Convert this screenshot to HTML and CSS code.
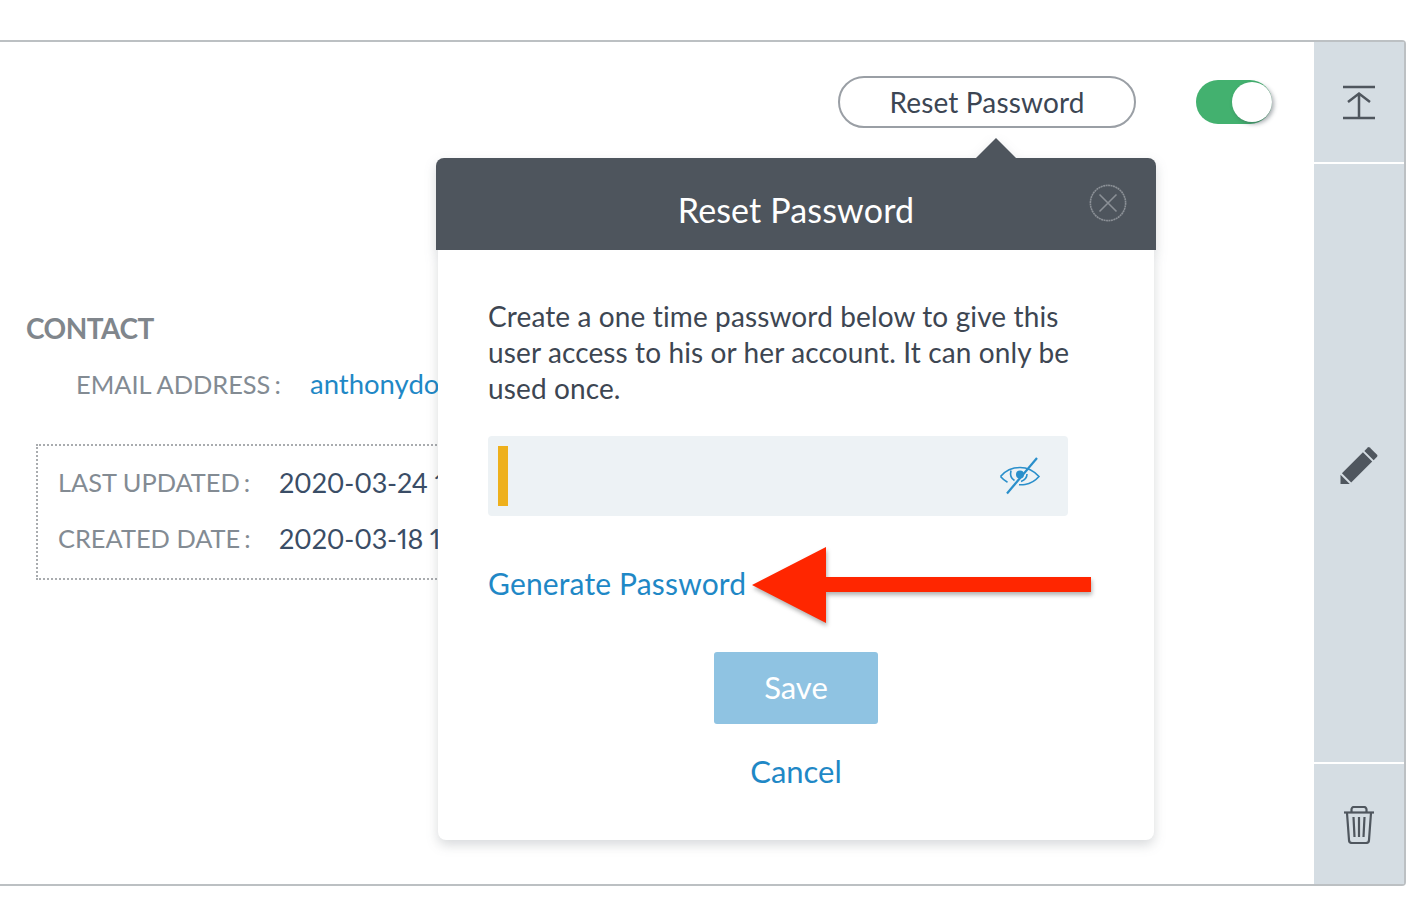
FILE: index.html
```html
<!DOCTYPE html>
<html lang="en">
<head>
<meta charset="utf-8">
<title>Reset Password</title>
<link rel="stylesheet" href="styles.css">
</head>
<body>
<div class="card">
  <main class="main">
    <div class="toolbar">
      <button class="pill">Reset Password</button>
      <div class="toggle"><span class="knob"></span></div>
    </div>
    <section class="contact">
      <h2 class="contact-title">CONTACT</h2>
      <div class="email-row"><span class="label">EMAIL ADDRESS<span class="colon">:</span></span><a class="email-link">anthonydo</a></div>
      <div class="meta">
        <div class="meta-row"><span class="label meta-label">LAST UPDATED<span class="colon">:</span></span><span class="meta-value">2020-03-24 1</span></div>
        <div class="meta-row"><span class="label meta-label">CREATED DATE<span class="colon">:</span></span><span class="meta-value">2020-03-18 1</span></div>
      </div>
    </section>

    <div class="popover">
      <span class="caret"></span>
      <header class="pop-head">
        <h1 class="pop-title">Reset Password</h1>
        <svg class="pop-close" viewBox="0 0 38 38" width="38" height="38" fill="none" stroke="#8b9096" stroke-width="1.6"><circle cx="19" cy="19" r="17.6" stroke-dasharray="2 .5"/><path d="M10.5 10.5l17 17M27.5 10.5l-17 17"/></svg>
      </header>
      <div class="pop-body">
        <p class="pop-text">Create a one time password below to give this user access to his or her account. It can only be used once.</p>
        <div class="pw-field">
          <span class="pw-cursor"></span>
          <svg class="pw-eye" viewBox="0 0 42 40" width="42" height="40" fill="none" stroke="#2a8fcb" stroke-width="1.6"><path d="M1.5 20.5C6 15 13 11.500 21 11.500c7 0 14 3.500 19 9-3.500 4-8 7-14 8-2 .3-4 .4-6 .2"/><path d="M1.500 20.500c2 2.300 4.300 4.300 7 5.800"/><path d="M12 14.500c-1 4 0 8 3.500 10"/><path d="M28 18c0 3-2 6-6 7.500"/><circle cx="21" cy="18.500" r="4" fill="#2a8fcb" stroke="none"/><path d="M8 37.500L38 2" stroke-width="2.200"/></svg>
        </div>
        <a class="gen-link">Generate Password</a>
        <button class="save">Save</button>
        <a class="cancel">Cancel</a>
      </div>
    </div>

    <svg class="annot" viewBox="0 0 344 84" width="344" height="84"><path d="M0 38L74 0V30H339V45H74V76Z" fill="#ff2600"/></svg>
  </main>

  <aside class="rail">
    <div class="rail-cell rail-top">
      <svg viewBox="0 0 34 36" width="34" height="36" fill="none" stroke="#4f565e" stroke-width="2.500"><path d="M1 3h32M1 34h32M17 34V10M6 18L17 9.500 28 18"/></svg>
    </div>
    <div class="rail-cell rail-mid">
      <svg viewBox="0 0 40 40" width="39" height="39" fill="#4f565e"><path d="M30.500 1.500l7.500 7.500a1.500 1.500 0 0 1 0 2l-3.500 3.500-9.500-9.500 3.500-3.500a1.500 1.500 0 0 1 2 0z"/><path d="M23.500 6.500l9.500 9.500L11.500 37.500 2 28z"/><path d="M.5 29.500l9.500 9.500L.5 39z"/></svg>
    </div>
    <div class="rail-cell rail-bot">
      <svg viewBox="0 0 32 38" width="32" height="38" fill="none" stroke="#4f565e" stroke-width="2.200"><path d="M1 6.500h30"/><path d="M8.500 6V3.500a2.500 2.500 0 0 1 2.500-2.500h10a2.500 2.500 0 0 1 2.500 2.500V6"/><path d="M4 7l2 27a3 3 0 0 0 3 3h14a3 3 0 0 0 3-3l2-27"/><path d="M10.500 11l1 20M16 11v20M21.500 11l-1 20"/></svg>
    </div>
  </aside>
</div>
</body>
</html>
```
FILE: styles.css
```css
* { box-sizing: border-box; }
html, body { margin: 0; height: 100%; background: #fff; }
body { font-family: Lato, "Open Sans", sans-serif; color: #3a4a5e; padding-top: 40px; overflow: hidden; font-variant-numeric: proportional-nums; }
.card { width: 1406px; height: 846px; display: flex; border: 2px solid #bcc0c3; border-left: 0; border-radius: 0 4px 4px 0; }
.main { flex: 1; position: relative; overflow: hidden; }
.toolbar { display: flex; justify-content: flex-end; align-items: center; height: 86px; padding: 34px 40px 0 0; gap: 60px; }
.pill { width: 298px; height: 52px; border: 2px solid #9a9fa5; border-radius: 26px; background: #fff; font: 28px Lato, sans-serif; letter-spacing: .15px; color: #3c4654; padding: 0; }
.toggle { background: #43b16f; border-radius: 22px; width: 76px; height: 44px; margin-right: 2px; position: relative; }
.knob { position: absolute; right: 0; top: 2px; width: 40px; height: 40px; border-radius: 50%; background: #fff; box-shadow: 2px 2px 4px rgba(60,70,80,.45); }
.contact { padding: 183px 0 0 26px; }
.contact-title { margin: 0; font-size: 28px; line-height: 34px; font-weight: 700; color: #80868c; letter-spacing: -.5px; }
.email-row { display: flex; margin: 21px 0 0 50px; font-size: 25.400px; line-height: 36px; white-space: nowrap; }
.label { color: #838b93; display: inline-block; }
.colon { margin-left: 4px; }
.email-row .label { width: 234px; }
.email-link { color: #1f88c6; font-size: 27.500px; }
.meta { margin: 42px 0 0 10px; width: 1000px; height: 136px; border: 2px dotted #a9acaf; padding: 8px 0 0 20px; }
.meta-row { display: flex; height: 56px; align-items: center; font-size: 25.400px; white-space: nowrap; }
.meta-label { width: 221px; }
.meta-value { color: #3a4d66; font-size: 27px; letter-spacing: -.2px; }
.popover { position: absolute; left: 436px; top: 116px; width: 720px; filter: drop-shadow(0 5px 6px rgba(60,70,80,.2)); }
.caret { position: absolute; left: 540px; top: -20px; width: 0; height: 0; border: 20px solid transparent; border-top: 0; border-bottom-color: #4e555d; }
.pop-head { height: 92px; background: #4e555d; border-radius: 8px 8px 0 0; display: flex; align-items: center; justify-content: center; position: relative; padding-top: 10px; }
.pop-title { margin: 0; font-size: 34px; font-weight: 400; letter-spacing: .15px; color: #fff; }
.pop-close { position: absolute; right: 29px; top: 26px; }
.pop-body { margin: 0 2px; height: 590px; background: #fff; border-radius: 0 0 8px 8px; padding: 48px 50px 0; display: flex; flex-direction: column; align-items: flex-start; }
.pop-text { margin: 0; width: 600px; font-size: 28px; line-height: 36px; letter-spacing: .12px; color: #3d4652; }
.pw-field { margin-top: 30px; width: 580px; height: 80px; background: #edf2f5; border-radius: 4px; display: flex; align-items: center; justify-content: space-between; padding: 0 27px 0 10px; }
.pw-cursor { width: 10px; height: 60px; background: #eeb01c; }
.gen-link { margin-top: 48px; font-size: 30px; line-height: 38px; letter-spacing: .15px; color: #1f88c6; }
.save { align-self: center; margin-top: 50px; width: 164px; height: 72px; border: 0; border-radius: 3px; background: #8fc3e2; color: #fff; font: 31px Lato, sans-serif; padding: 0 0 2px; }
.cancel { align-self: center; margin-top: 27px; font-size: 31px; line-height: 40px; color: #1f88c6; }
.annot { position: absolute; left: 752px; top: 505px; filter: drop-shadow(1px 3px 2px rgba(60,60,60,.4)); }
.rail { width: 90px; display: flex; flex-direction: column; background: #d5dde3; }
.rail-cell { display: flex; align-items: center; justify-content: center; }
.rail-top { height: 122px; border-bottom: 2px solid #fff; }
.rail-mid { flex: 1; border-bottom: 2px solid #fff; padding-top: 4px; }
.rail-bot { height: 120px; padding-top: 2px; }
```
